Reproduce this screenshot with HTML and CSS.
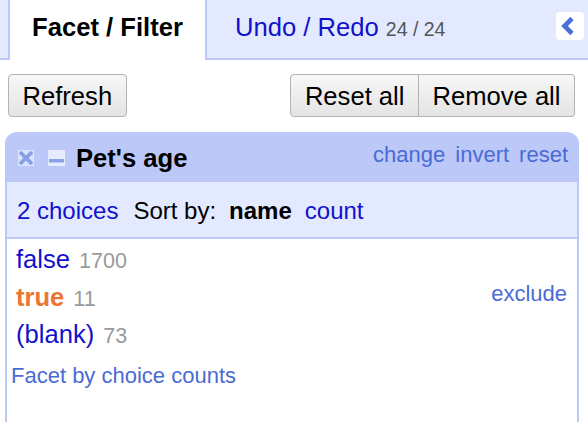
FILE: index.html
```html
<!DOCTYPE html>
<html>
<head>
<meta charset="utf-8">
<link rel="stylesheet" href="styles.css">
</head>
<body>
<div class="tabs">
  <div class="tab-edge"></div>
  <div class="tab-active">Facet / Filter</div>
  <div class="tab-rest">
    <div class="tab-label"><span class="link">Undo / Redo</span> <span class="hist">24 / 24</span></div>
    <div class="collapse">
      <svg width="28" height="28" viewBox="0 0 28 28"><polyline points="16,6.5 8.5,14 16,21.5" fill="none" stroke="#4a6fd8" stroke-width="4.6"/></svg>
    </div>
  </div>
</div>
<div class="toolbar">
  <button class="btn">Refresh</button>
  <div class="btn-group"><button class="btn btn-left">Reset all</button><button class="btn btn-right">Remove all</button></div>
</div>
<div class="facet">
  <div class="facet-title">
    <svg class="icon" width="16" height="16" viewBox="0 0 16 16"><rect x="0" y="0" width="16" height="16" fill="#dbe2fb"/><path d="M2 2 L14 14 M14 2 L2 14" stroke="#86a0e6" stroke-width="3.8"/></svg>
    <svg class="icon icon-min" width="17" height="16" viewBox="0 0 17 16"><rect x="0" y="0" width="17" height="16" fill="#e6ebfd"/><rect x="1" y="9" width="15" height="3.5" fill="#8aa2e6"/></svg>
    <span class="facet-name">Pet's age</span>
    <div class="facet-actions"><span>change</span><span>invert</span><span>reset</span></div>
  </div>
  <div class="facet-controls">
    <span class="link choices">2 choices</span>
    <span>Sort by:</span>
    <b>name</b>
    <span class="link">count</span>
  </div>
  <div class="facet-body">
    <div class="choice"><span class="name link">false</span><span class="cnt">1700</span></div>
    <div class="choice"><span class="name sel">true</span><span class="cnt">11</span><span class="exclude">exclude</span></div>
    <div class="choice"><span class="name link">(blank)</span><span class="cnt">73</span></div>
    <div class="by-counts">Facet by choice counts</div>
  </div>
</div>
</body>
</html>
```
FILE: styles.css
```css
html, body {
  margin: 0;
  padding: 0;
  height: 422px;
  overflow: hidden;
  background: #fff;
  font-family: "Liberation Sans", Arial, sans-serif;
  color: #000;
}
.link { color: #1111cc; }

.tabs {
  display: flex;
  height: 60px;
}
.tab-edge {
  width: 8px;
  background: #e3e9ff;
  border-right: 2px solid #bcc8f8;
  border-bottom: 2px solid #bcc8f8;
}
.tab-active {
  width: 195px;
  background: #fff;
  font-weight: bold;
  font-size: 25.6px;
  line-height: 30px;
  padding-top: 12px;
  text-align: center;
  box-sizing: border-box;
}
.tab-rest {
  flex: 1;
  display: flex;
  align-items: flex-start;
  background: #e3e9ff;
  border-left: 2px solid #bcc8f8;
  border-bottom: 2px solid #bcc8f8;
  padding: 12px 4px 0 28px;
}
.tab-label {
  font-size: 25.6px;
  line-height: 30px;
}
.hist {
  font-size: 19.5px;
  color: #555;
}
.collapse {
  margin-left: auto;
  margin-top: 0;
  width: 28px;
  height: 28px;
  background: #fff;
  border-radius: 4px;
  display: flex;
}

.toolbar {
  display: flex;
  justify-content: space-between;
  padding: 14px 13px 0 8px;
}
.btn {
  font-family: "Liberation Sans", Arial, sans-serif;
  font-size: 25.6px;
  line-height: 30px;
  height: 43px;
  padding: 0 13.5px;
  color: #000;
  background: linear-gradient(#f7f7f7, #e4e4e4);
  border: 1px solid #b3b3b3;
  border-radius: 4px;
  margin: 0;
}
.btn-group { display: flex; }
.btn-left { border-radius: 4px 0 0 4px; }
.btn-right { border-radius: 0 4px 4px 0; border-left: none; }

.facet {
  margin: 15px 9px 0 5px;
  border-radius: 12px 12px 0 0;
  overflow: hidden;
}
.facet-title {
  height: 50px;
  box-sizing: border-box;
  background: #bcc8f8;
  display: flex;
  align-items: center;
  padding: 2px 11px 0 13px;
}
.icon { flex: none; display: block; }
.icon-min { margin-left: 14px; }
.facet-name {
  margin-left: 11px;
  font-weight: bold;
  font-size: 25.6px;
  line-height: 30px;
}
.facet-actions {
  margin-left: auto;
  display: flex;
  gap: 10px;
  font-size: 22px;
  line-height: 24px;
  color: #4a6bd4;
  padding-bottom: 6px;
}
.facet-controls {
  height: 57px;
  box-sizing: border-box;
  background: #e3e9ff;
  border-left: 2px solid #bcc8f8;
  border-right: 2px solid #bcc8f8;
  border-bottom: 2px solid #bcc8f8;
  display: flex;
  align-items: center;
  gap: 13px;
  padding: 2px 0 0 10px;
  font-size: 24px;
  line-height: 28px;
}
.choices { margin-right: 2px; }
.facet-body {
  height: 183px;
  box-sizing: border-box;
  background: #fff;
  border-left: 2px solid #bcc8f8;
  border-right: 2px solid #bcc8f8;
  padding: 5px 10px 0 4px;
}
.choice {
  display: flex;
  align-items: baseline;
  height: 37.5px;
  padding-left: 5px;
}
.name {
  font-size: 25.6px;
  line-height: 30px;
}
.sel {
  color: #ea7634;
  font-weight: bold;
}
.cnt {
  margin-left: 9px;
  font-size: 21.5px;
  line-height: 30px;
  color: #999;
}
.exclude {
  margin-left: auto;
  align-self: flex-start;
  font-size: 22px;
  line-height: 24px;
  color: #4a6bd4;
}
.by-counts {
  margin-top: 7px;
  font-size: 22px;
  line-height: 24px;
  color: #4a6bd4;
}
```
